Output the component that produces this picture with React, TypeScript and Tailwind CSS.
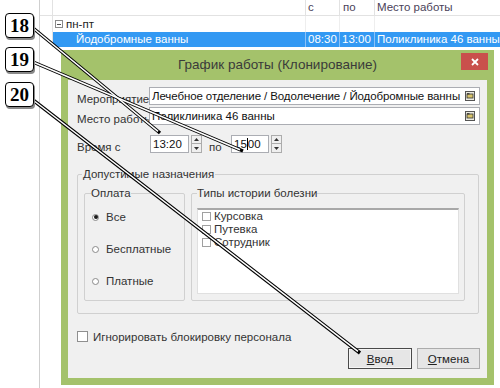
import React from "react";

function FolderIcon() {
  return (
    <svg width="10" height="10" viewBox="0 0 10 10" className="shrink-0">
      <rect x="0.5" y="0.5" width="9" height="9" fill="#ecebe0" stroke="#555" />
      <rect x="2" y="3" width="6" height="4" fill="#d9c56b" stroke="#333" strokeWidth="0.8" />
      <rect x="2" y="2.2" width="2.5" height="1.2" fill="#333" />
    </svg>
  );
}

function SpinArrows() {
  return (
    <div className="ml-[2px] flex h-[18px] w-[11px] flex-col">
      <div className="flex h-[9px] items-center justify-center border border-[#acacac] bg-[#efefef]">
        <svg width="5" height="3" viewBox="0 0 5 3"><path d="M0 3 L2.5 0 L5 3 Z" fill="#333" /></svg>
      </div>
      <div className="flex h-[9px] items-center justify-center border border-t-0 border-[#acacac] bg-[#efefef]">
        <svg width="5" height="3" viewBox="0 0 5 3"><path d="M0 0 L2.5 3 L5 0 Z" fill="#333" /></svg>
      </div>
    </div>
  );
}

function Radio({ checked, label }: { checked?: boolean; label: string }) {
  return (
    <div className="flex h-[14px] items-center">
      <span className="ml-[1px] flex h-[7px] w-[7px] items-center justify-center rounded-full border border-[#8a8a8a] bg-white">
        {checked && <span className="h-[4px] w-[4px] rounded-full bg-[#1a1a1a]" />}
      </span>
      <span className="ml-[7px] leading-[14px]">{label}</span>
    </div>
  );
}

function ListItem({ label }: { label: string }) {
  return (
    <div className="flex h-[13px] items-center">
      <span className="h-[9px] w-[9px] border border-[#a0a0a0] bg-white" />
      <span className="ml-[3px] leading-[13px]">{label}</span>
    </div>
  );
}

function Callout({ n, top }: { n: string; top: string }) {
  return (
    <div
      className={`absolute left-[5px] ${top} flex h-[25px] w-[29px] items-center justify-center rounded-[4px] border-[1.5px] border-black bg-white shadow-[1px_2px_0_#8a8a8a] font-['Liberation_Serif',serif] text-[19px] font-bold leading-none text-black`}
    >
      {n}
    </div>
  );
}

export default function App() {
  return (
    <div className="relative h-[388px] w-[500px] overflow-hidden bg-white font-['Liberation_Sans',Arial,sans-serif] text-[11.5px] text-[#333]">
      {/* background grid */}
      <div className="flex h-full">
        <div className="w-[39px] shrink-0" />
        <div className="flex flex-1 flex-col border-l border-[#cfcfcf]">
          <div className="flex h-[16px] border-b border-[#e2e2e2]">
            <div className="w-[13px] border-r border-[#e2e2e2]" />
            <div className="w-[253px] border-r border-[#e2e2e2]" />
            <div className="w-[34px] border-r border-[#e2e2e2] pl-[2px] leading-[15px] text-[#4a3f5a]">с</div>
            <div className="w-[35px] border-r border-[#e2e2e2] pl-[3px] leading-[15px] text-[#4a3f5a]">по</div>
            <div className="flex-1 pl-[2px] leading-[15px] text-[#4a3f5a]">Место работы</div>
          </div>
          <div className="flex h-[16px]">
            <div className="w-[13px] border-r border-[#e2e2e2]" />
            <div className="flex w-[253px] items-center border-r border-[#eeeeee] pl-[2px]">
              <span className="flex h-[8px] w-[8px] items-center justify-center border border-[#8a8a8a]">
                <span className="h-px w-[4px] bg-[#555]" />
              </span>
              <span className="ml-[3px] leading-[15px] text-[#222]">пн-пт</span>
            </div>
            <div className="w-[34px] border-r border-[#eeeeee]" />
            <div className="w-[35px] border-r border-[#eeeeee]" />
            <div className="flex-1" />
          </div>
          <div className="flex h-[15px] text-white">
            <div className="w-[13px] border-r border-[#e2e2e2] bg-white" />
            <div className="w-[253px] border-r border-[#8cc2f7] bg-[#3399f3] pl-[23px] leading-[15px]">Йодобромные ванны</div>
            <div className="w-[34px] border-r border-[#8cc2f7] bg-[#3399f3] pl-[2px] leading-[15px]">08:30</div>
            <div className="w-[35px] border-r border-[#8cc2f7] bg-[#3399f3] pl-[2px] leading-[15px]">13:00</div>
            <div className="flex-1 whitespace-nowrap bg-[#3399f3] pl-[2px] leading-[15px]">Поликлиника 46 ванны</div>
          </div>
          <div className="flex-1" />
        </div>
      </div>

      {/* dialog window */}
      <div className="absolute left-[61px] top-[50px] flex h-[335px] w-[433px] flex-col bg-[#a4c26b]">
        <div className="grid h-[30px] grid-cols-[1fr_auto_1fr]">
          <div />
          <div className="text-[13.5px] leading-[30px] text-[#3a3a3a]">График работы (Клонирование)</div>
          <div className="flex justify-end">
            <div className="mr-[6px] mt-[3px] flex h-[17px] w-[27px] items-center justify-center bg-[#c9504c]">
              <svg width="8" height="8" viewBox="0 0 8 8">
                <path d="M1 1 L7 7 M7 1 L1 7" stroke="white" strokeWidth="1.8" />
              </svg>
            </div>
          </div>
        </div>
        <div className="mx-[7px] mb-[7px] flex flex-1 flex-col bg-[#f0f0f0] pl-[9px] pr-[7px] pt-[7px]">
          <div className="flex h-[18px]">
            <div className="w-[72px] shrink-0 pt-[5px] leading-[14px] whitespace-nowrap">Мероприятие</div>
            <div className="flex min-w-0 flex-1 items-center border border-[#abadb3] bg-white pl-[2px] pr-[4px]">
              <span className="min-w-0 flex-1 overflow-hidden whitespace-nowrap leading-[14px] tracking-[-0.1px] text-[#111]">Лечебное отделение / Водолечение / Йодобромные ванны</span>
              <FolderIcon />
            </div>
          </div>
          <div className="mt-[2px] flex h-[18px]">
            <div className="w-[72px] shrink-0 overflow-visible pt-[5px] leading-[14px] whitespace-nowrap">Место работы</div>
            <div className="flex min-w-0 flex-1 items-center border border-[#abadb3] bg-white pl-[2px] pr-[4px]">
              <span className="flex-1 whitespace-nowrap leading-[14px] text-[#111]">Поликлиника 46 ванны</span>
              <FolderIcon />
            </div>
          </div>
          <div className="mt-[10px] flex h-[18px]">
            <div className="w-[73px] shrink-0 pt-[5px] leading-[14px]">Время с</div>
            <div className="flex w-[39px] items-center border border-[#abadb3] bg-white pl-[2px] leading-[14px] text-[#111]">13:20</div>
            <SpinArrows />
            <div className="ml-[7px] w-[22px] pt-[5px] leading-[14px]">по</div>
            <div className="flex w-[38px] items-center border border-[#abadb3] bg-white pl-[2px] leading-[14px] text-[#111]">
              15<span className="h-[12px] w-px bg-black" />00
            </div>
            <SpinArrows />
          </div>

          <fieldset className="mt-[14px] h-[147px] w-[402px] rounded-[2px] border border-[#d0d0d0] pl-[4px]">
            <legend className="px-[1px] leading-[14px]">Допустимые назначения</legend>
            <div className="ml-[2px] mt-[5px] flex gap-[6px]">
              <fieldset className="h-[115px] w-[101px] rounded-[2px] border border-[#d0d0d0] pl-[6px]">
                <legend className="leading-[14px]">Оплата</legend>
                <div className="mt-[10px] flex flex-col gap-[18px]">
                  <Radio checked label="Все" />
                  <Radio label="Бесплатные" />
                  <Radio label="Платные" />
                </div>
              </fieldset>
              <fieldset className="h-[115px] w-[274px] rounded-[2px] border border-[#d0d0d0] pl-[5px]">
                <legend className="leading-[14px]">Типы истории болезни</legend>
                <div className="mt-[8px] h-[86px] w-[262px] border border-t-2 border-[#e0e0e0] border-t-[#a8a8a8] bg-white pl-[4px]">
                  <ListItem label="Курсовка" />
                  <ListItem label="Путевка" />
                  <ListItem label="Сотрудник" />
                </div>
              </fieldset>
            </div>
          </fieldset>

          <div className="mt-[17px] flex h-[11px] items-center">
            <span className="h-[11px] w-[11px] border border-[#8f8f8f] bg-white" />
            <span className="ml-[5px] leading-[14px]">Игнорировать блокировку персонала</span>
          </div>

          <div className="mt-[6px] flex justify-end gap-[5px]">
            <div className="flex h-[21px] w-[64px] items-center justify-center border border-[#4a4a4a] bg-[#e6e6e6] shadow-[inset_0_0_0_1px_#f5f5f5] leading-[14px] text-[#222]">
              <span><span className="underline">В</span>вод</span>
            </div>
            <div className="flex h-[21px] w-[63px] items-center justify-center border border-[#acacac] bg-[#e6e6e6] leading-[14px] text-[#222]">
              <span><span className="underline">О</span>тмена</span>
            </div>
          </div>
        </div>
      </div>

      {/* callout lines */}
      <svg className="pointer-events-none absolute left-0 top-0" width="500" height="388" viewBox="0 0 500 388">
        <g stroke="black" strokeWidth="3.5" fill="none">
          <line x1="33" y1="28" x2="160" y2="133" />
          <line x1="33" y1="62" x2="243" y2="151" />
          <line x1="33" y1="100" x2="360" y2="353" />
        </g>
        <g stroke="white" strokeWidth="1.5" fill="none">
          <line x1="33" y1="28" x2="158" y2="131.3" />
          <line x1="33" y1="62" x2="240" y2="149.7" />
          <line x1="33" y1="100" x2="358" y2="351.4" />
        </g>
      </svg>

      <Callout n="18" top="top-[13px]" />
      <Callout n="19" top="top-[47px]" />
      <Callout n="20" top="top-[82px]" />
    </div>
  );
}
